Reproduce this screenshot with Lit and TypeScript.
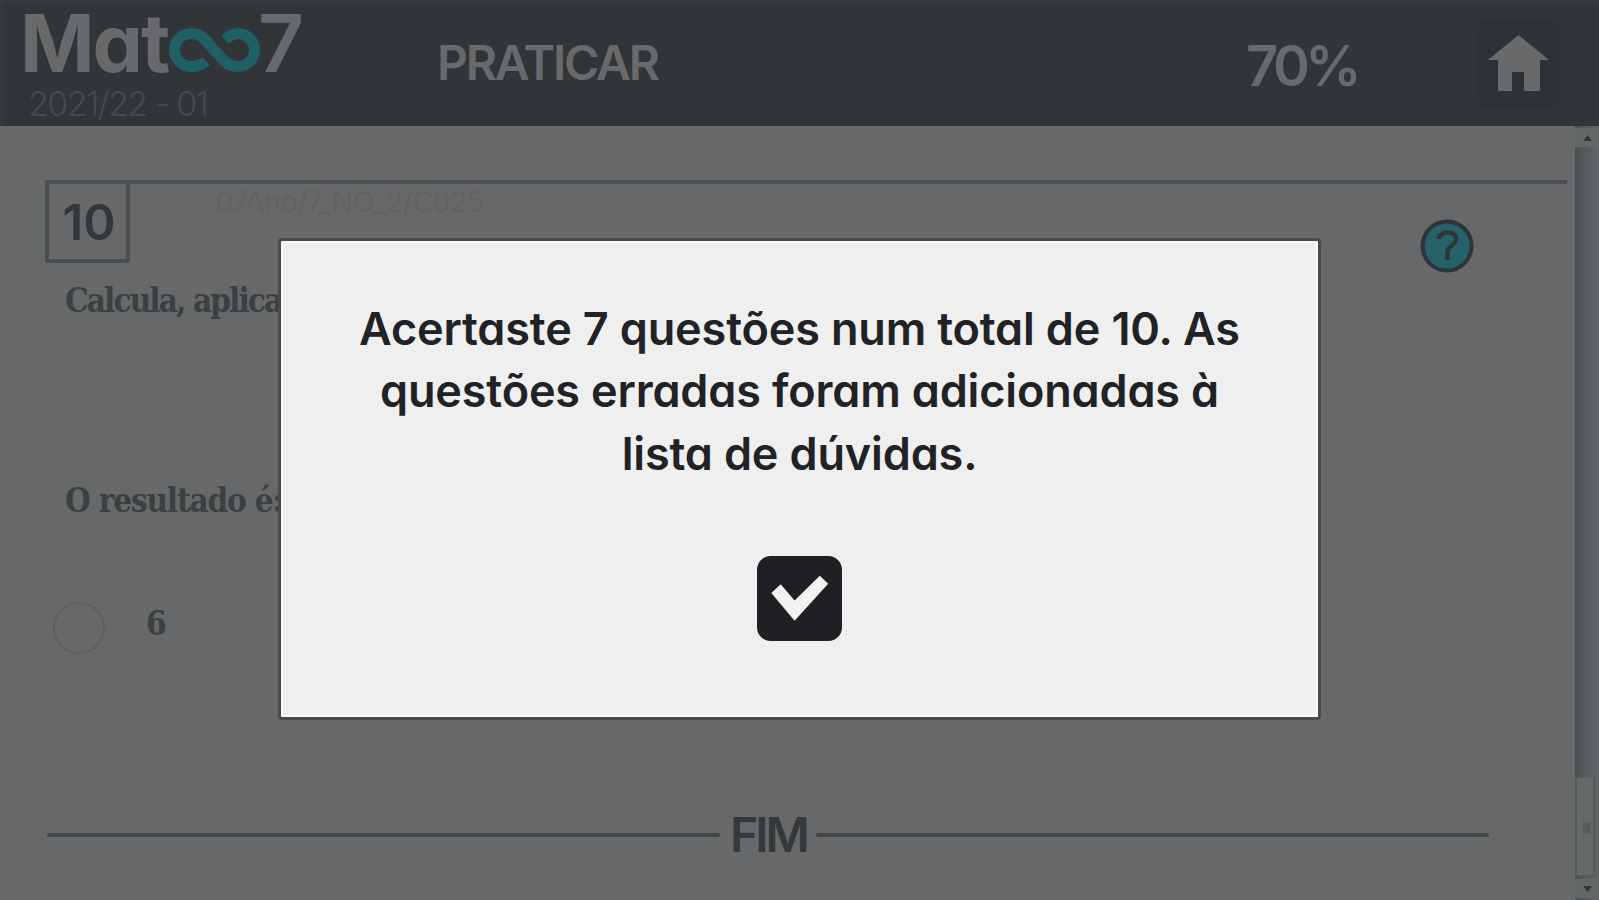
import { LitElement, html, css } from 'lit';
import { customElement, property } from 'lit/decorators.js';

@customElement('app-header')
export class AppHeader extends LitElement {
  static get styles() {
    return css`
      :host {
        display: grid;
        grid-template-columns: 417px 1fr 232px 82px;
        box-sizing: border-box;
        height: 126px;
        padding: 0 39px 0 20px;
        background: #323538;
        box-shadow: inset 4px 4px 3px -1px #383b3e;
        color: #67696b;
        font-weight: 600;
        white-space: nowrap;
      }
      .logo {
        display: flex;
        align-items: center;
        height: 85px;
        font-size: 80px;
        line-height: 85px;
      }
      .mat {
        width: 149px;
        font-weight: 700;
        letter-spacing: -2px;
      }
      .infinity {
        width: 92px;
        height: 46px;
        margin-top: 15px;
      }
      .seven {
        margin-left: -3px;
      }
      .year {
        padding-left: 8px;
        font-size: 34px;
        font-weight: 300;
        line-height: 38px;
        letter-spacing: -1.6px;
        color: #46494c;
      }
      .title {
        font-size: 48px;
        line-height: 125px;
        letter-spacing: -2.2px;
      }
      .score {
        font-size: 56px;
        font-weight: 600;
        line-height: 133px;
        letter-spacing: -4.5px;
      }
      .home {
        width: 82px;
        height: 88px;
        margin-top: 20px;
        border-radius: 10px;
        background: #2f3235;
      }
    `;
  }

  @property() title = '';
  @property() year = '';
  @property() score = '';

  render() {
    return html`
      <div>
        <div class="logo">
          <span class="mat">Mat</span>
          <svg class="infinity" viewBox="0 0 92 46" fill="none" stroke="#1f5f66" stroke-width="11">
            <path d="M37 34 C32 39 27 39.5 22 39.5 A16.5 16.5 0 0 1 22 6.5 C30 6.5 34 10 39 16 L54 33 C59 38 64 39.5 69 39.5 A16.5 16.5 0 0 0 69 6.5 C64 6.5 60 9 56 13" />
          </svg>
          <span class="seven">7</span>
        </div>
        <div class="year">${this.year}</div>
      </div>
      <div class="title">${this.title}</div>
      <div class="score">${this.score}</div>
      <svg class="home" viewBox="0 0 82 88">
        <path fill="#67696b" d="M40.5 15 L71 40 H62 V71 H46 V52 H34 V71 H20 V40 H10 Z" />
      </svg>
    `;
  }
}

@customElement('scroll-bar')
export class ScrollBar extends LitElement {
  static get styles() {
    return css`
      :host {
        display: flex;
        flex-direction: column;
        width: 24px;
        box-sizing: border-box;
        padding: 2px 0;
        background: linear-gradient(90deg, #4a4f50, #54595b 35%, #606566);
      }
      .button {
        display: flex;
        align-items: center;
        justify-content: center;
        height: 19px;
        background: #646768;
      }
      .button svg {
        width: 9px;
        height: 6px;
      }
      .track {
        flex: 1;
        display: flex;
        align-items: flex-end;
      }
      .thumb {
        display: flex;
        align-items: center;
        justify-content: center;
        box-sizing: border-box;
        width: 20px;
        height: 99px;
        margin-bottom: 2px;
        border: 2px solid #535a5a;
        border-top-color: #66696a;
        border-radius: 3px;
        background: #66696a;
      }
      .grip {
        width: 8px;
        height: 12px;
        margin-left: 3px;
        background: #565c5c;
      }
    `;
  }

  render() {
    return html`
      <div class="button"><svg viewBox="0 0 10 7"><path fill="#303335" d="M5 0 L10 7 H0 Z" /></svg></div>
      <div class="track"><div class="thumb"><div class="grip"></div></div></div>
      <div class="button"><svg viewBox="0 0 10 7"><path fill="#303335" d="M0 0 H10 L5 7 Z" /></svg></div>
    `;
  }
}

@customElement('result-dialog')
export class ResultDialog extends LitElement {
  static get styles() {
    return css`
      :host {
        display: flex;
        flex-direction: column;
        align-items: center;
        box-sizing: border-box;
        width: 1043px;
        height: 482px;
        padding-top: 57px;
        border: 3px solid #48494b;
        border-radius: 4px;
        background: #efefef;
        box-shadow: inset 0 0 0 2px #fbfbfb;
        color: #202226;
      }
      .line {
        height: 62.4px;
        font-size: 45px;
        font-weight: 600;
        line-height: 62.4px;
        letter-spacing: -0.15px;
        white-space: nowrap;
      }
      .ok {
        width: 85px;
        height: 85px;
        margin-top: 71px;
      }
    `;
  }

  @property({ type: Array }) lines: string[] = [];

  render() {
    return html`
      ${this.lines.map(line => html`<div class="line">${line}</div>`)}
      <svg class="ok" viewBox="0 0 86 86">
        <rect width="86" height="86" rx="14" fill="#1e2024" />
        <path fill="#f2f2f2" d="M14.5 37.5 L24 28.5 L38 45 L63.5 20 L72 28 L38 65.5 Z" />
      </svg>
    `;
  }
}

@customElement('app-root')
export class AppRoot extends LitElement {
  static get styles() {
    return css`
      :host {
        position: relative;
        display: flex;
        flex-direction: column;
        width: 1599px;
        height: 900px;
        overflow: hidden;
        background: #676869;
        font-family: Inter, 'Liberation Sans', sans-serif;
        font-feature-settings: 'cv11';
      }
      .body {
        flex: 1;
        display: flex;
      }
      .page {
        flex: 1;
        padding: 54px 8px 0 45px;
      }
      .question-top {
        display: flex;
        height: 80px;
        border-top: 4px solid #4c5052;
      }
      .number {
        box-sizing: border-box;
        width: 85px;
        height: 79px;
        padding-left: 3px;
        border: 4px solid #4a4e51;
        border-top: 0;
        border-radius: 0 0 4px 4px;
        color: #343739;
        font-size: 49px;
        font-weight: 600;
        line-height: 77px;
        text-align: center;
      }
      .code {
        flex: 1;
        padding-left: 86px;
        color: #606263;
        font-size: 28px;
        font-weight: 300;
        line-height: 36px;
      }
      .help {
        width: 54px;
        height: 54px;
        margin: 35px 93px 0 0;
      }
      .text {
        padding-left: 20px;
        height: 200px;
        color: #3b4042;
        font-family: 'DejaVu Serif Condensed', 'DejaVu Serif', serif;
        font-size: 33px;
        font-weight: 700;
        line-height: 73px;
        letter-spacing: -1.2px;
        white-space: nowrap;
      }
      .text.prompt {
        letter-spacing: -1.9px;
      }
      .option {
        display: flex;
        align-items: center;
        gap: 41px;
        height: 52px;
        margin: -62px 0 0 8px;
      }
      .radio {
        box-sizing: border-box;
        width: 52px;
        height: 52px;
        border: 2px solid #5e5f61;
        border-radius: 50%;
      }
      .option .text {
        height: 52px;
        padding: 0;
        line-height: 43px;
      }
      .end {
        display: flex;
        align-items: center;
        gap: 10px;
        width: 1443px;
        height: 50px;
        margin: 156px 0 0 2px;
        color: #34393b;
        font-size: 48px;
        font-weight: 600;
        line-height: 50px;
        letter-spacing: -3px;
      }
      .rule {
        width: 673px;
        height: 4px;
        border-radius: 2px;
        background: #444749;
      }
      .end span {
        width: 76px;
      }
      .overlay {
        position: absolute;
        top: 238px;
        left: 278px;
      }
    `;
  }

  render() {
    return html`
      <app-header title="PRATICAR" year="2021/22 - 01" score="70%"></app-header>
      <div class="body">
        <div class="page">
          <div class="question-top">
            <div class="number">10</div>
            <div class="code">07Ano/7_NO_2/C025</div>
            <svg class="help" viewBox="0 0 54 54" fill="none">
              <circle cx="27" cy="27" r="24.5" fill="#27626a" stroke="#2e3437" stroke-width="4" />
              <path d="M18.5 20 C20 11.5 36 11 36 20 C36 26 27.5 27 27.5 33 V41" stroke="#2e3437" stroke-width="4.5" />
            </svg>
          </div>
          <div class="text prompt">Calcula, aplica</div>
          <div class="text">O resultado é:</div>
          <div class="option">
            <div class="radio"></div>
            <div class="text">6</div>
          </div>
          <div class="end">
            <div class="rule"></div>
            <span>FIM</span>
            <div class="rule"></div>
          </div>
        </div>
        <scroll-bar></scroll-bar>
      </div>
      <result-dialog
        class="overlay"
        .lines=${['Acertaste 7 questões num total de 10. As', 'questões erradas foram adicionadas à', 'lista de dúvidas.']}
      ></result-dialog>
    `;
  }
}
